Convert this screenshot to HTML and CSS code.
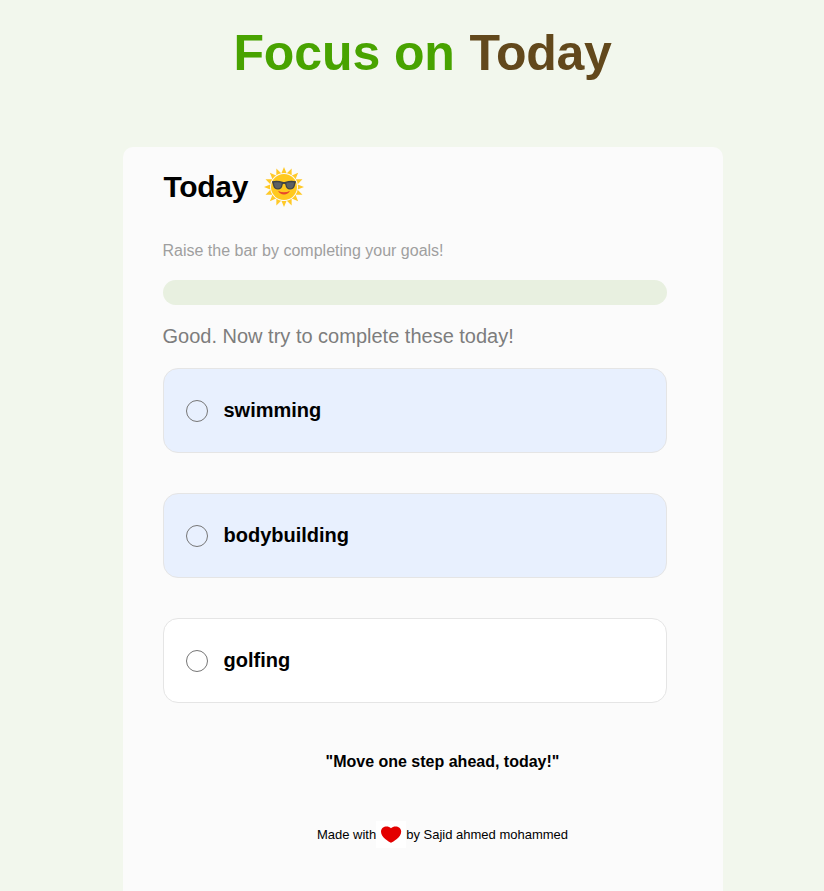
FILE: index.html
```html
<!DOCTYPE html>
<html lang="en">
<head>
<meta charset="utf-8">
<title>Focus on Today</title>
<link rel="stylesheet" href="styles.css">
</head>
<body>
<h1 class="title">Focus on <span class="title-accent">Today</span></h1>
<main class="card">
  <div class="heading">
    <h2>Today</h2>
    <svg class="sun" viewBox="-20 -20 40 40" aria-hidden="true">
      <defs>
        <path id="ray" d="M-2.6-13.7Q0-14.4 2.6-13.7L0-20Z"/>
        <g id="rays"><use href="#ray"/><use href="#ray" transform="rotate(22.5)"/><use href="#ray" transform="rotate(45)"/><use href="#ray" transform="rotate(67.5)"/></g>
      </defs>
      <g fill="#ffc928"><use href="#rays"/><use href="#rays" transform="rotate(90)"/><use href="#rays" transform="rotate(180)"/><use href="#rays" transform="rotate(270)"/></g>
      <circle r="13" fill="#ffc91f"/>
      <path d="M-6 3.8Q0 6.8 6 3.8Q4 7.6 0 7.6Q-4 7.6-6 3.8Z" fill="#e8472b"/>
      <path d="M-12-5.8Q-6-6.8-1.5-5.2Q0-4.8 1.5-5.2Q6-6.8 12-5.8L11.8-4.2Q11.3-3.6 11 -1.8Q10 2.5 6 2.5Q2 2.5 1.2-2.8Q0-3.8-1.2-2.8Q-2 2.5-6 2.5Q-10 2.5-11-1.8Q-11.3-3.6-11.8-4.2Z" fill="#3f4244"/>
      <path d="M-10-4.5Q-6-5.3-2.4-4.2Q-2.2 1.5-6 1.5Q-10 1.5-10-4.5ZM10-4.5Q6-5.3 2.4-4.2Q2.2 1.5 6 1.5Q10 1.5 10-4.5Z" fill="#5d6163"/>
    </svg>
  </div>
  <p class="hint">Raise the bar by completing your goals!</p>
  <div class="progress"></div>
  <p class="status">Good. Now try to complete these today!</p>
  <ul class="goals">
    <li class="goal filled"><span class="check"></span>swimming</li>
    <li class="goal filled"><span class="check"></span>bodybuilding</li>
    <li class="goal"><span class="check"></span>golfing</li>
  </ul>
  <p class="quote">"Move one step ahead, today!"</p>
  <footer class="footer">
    <span>Made with</span>
    <svg class="heart" viewBox="0 0 30 27" aria-hidden="true"><path fill="#fff" d="M0 0h30v27H0z"/><path fill="#e30000" d="M15 21.7C13 20.6 5 16.5 5 10.7C5 5 12 4 15 7.2C18 4 25.2 5 25.2 10.7C25.2 16.5 17 20.600 15 21.700Z"/></svg>
    <span>by Sajid ahmed mohammed</span>
  </footer>
</main>
</body>
</html>
```
FILE: styles.css
```css
* {
  box-sizing: border-box;
}

body {
  margin: 0;
  padding: 25px 0 0 21px;
  height: 891px;
  background: #f2f7ed;
  color: #000;
  font-family: "Liberation Sans", Arial, sans-serif;
}

h2, p, ul {
  margin: 0;
}

.title {
  margin: 0 0 65px;
  font-size: 50px;
  line-height: 57px;
  letter-spacing: -0.1px;
  text-align: center;
  color: #48a300;
}

.title-accent {
  margin-left: 1px;
  letter-spacing: -0.3px;
  color: #62481c;
}

.card {
  width: 600px;
  height: 744px;
  margin: 0 auto;
  padding: 20px 0 0 40px;
  border-radius: 10px 10px 0 0;
  background: #fbfbfb;
}

.heading {
  display: flex;
  align-items: center;
  gap: 15px;
  height: 40px;
}

.heading h2 {
  width: 86px;
  padding-left: 1px;
  font-size: 30px;
  line-height: 34px;
  letter-spacing: -0.3px;
}

.sun {
  width: 40px;
  height: 40px;
}

.hint {
  margin-top: 35px;
  font-size: 16px;
  line-height: 18px;
  color: #9f9f9f;
}

.progress {
  width: 504px;
  height: 25px;
  margin-top: 20px;
  border-radius: 13px;
  background: #e8f0e0;
}

.status {
  margin-top: 20px;
  font-size: 20px;
  line-height: 23px;
  color: #7d7d7d;
}

.goals {
  display: grid;
  gap: 40px;
  width: 504px;
  margin-top: 20px;
  padding: 0;
  list-style: none;
}

.goal {
  display: flex;
  align-items: center;
  gap: 16px;
  height: 85px;
  padding: 0 22px;
  border: 1px solid #e5e5e5;
  border-radius: 15px;
  background: #fff;
  font-size: 20px;
  font-weight: bold;
}

.goal.filled {
  background: #e8f0fe;
}

.check {
  width: 22px;
  height: 22px;
  border: 1px solid #767676;
  border-radius: 50%;
}

.quote {
  margin-top: 50px;
  font-size: 16px;
  line-height: 18px;
  font-weight: bold;
  text-align: center;
}

.footer {
  display: flex;
  align-items: center;
  justify-content: center;
  margin-top: 50px;
  font-size: 13px;
  line-height: 15px;
}

.heart {
  width: 30px;
  height: 27px;
}
```
